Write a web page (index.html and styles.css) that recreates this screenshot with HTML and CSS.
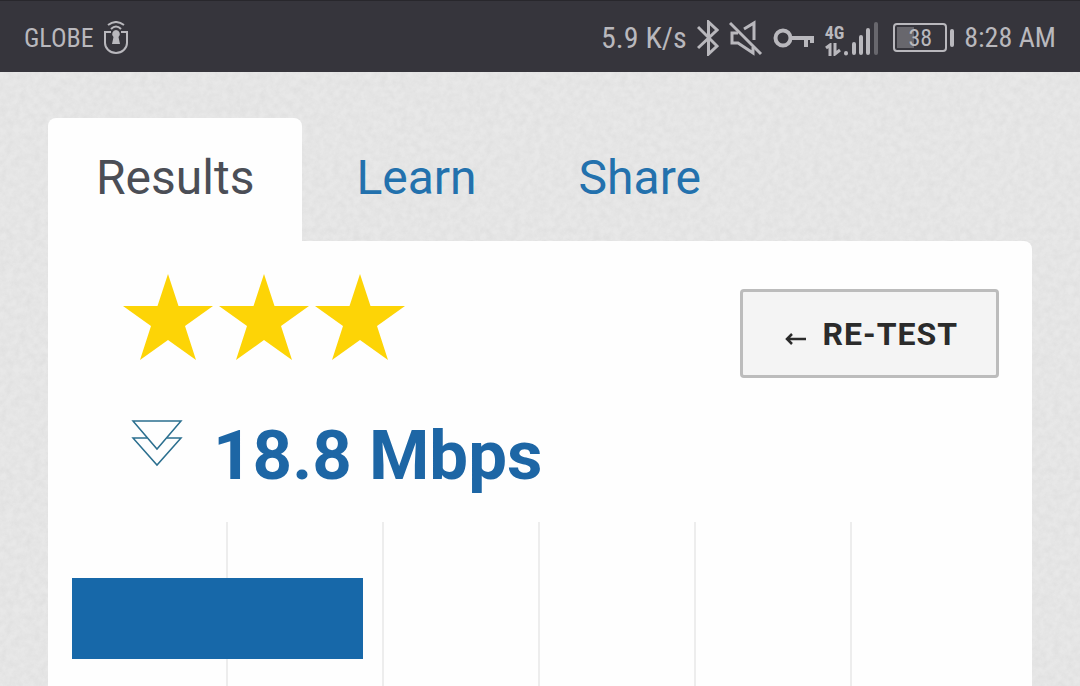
FILE: index.html
```html
<!DOCTYPE html>
<html lang="en">
<head>
    <meta charset="UTF-8">
    <meta name="viewport" content="width=device-width, initial-scale=1.0">
    <title>Speed Test Results</title>
    <link rel="stylesheet" href="styles.css">
</head>
<body>
    <header class="status">
        <div class="status-left">
            <span class="carrier">GLOBE</span>
            <svg class="icon" width="24" height="34" viewBox="0 0 24 34" fill="none" stroke="#b9b8bd" stroke-width="2">
                <path d="M7 11H1V22A11 10 0 0 0 23 22V11H17"/>
                <path d="M4 4Q12 -2 20 4M7 8Q12 3 17 8"/>
                <path d="M12 9A4 4 0 0 0 9.500 16L8 23H16L14.500 16A4 4 0 0 0 12 9Z" fill="#b9b8bd" stroke="none"/>
            </svg>
        </div>
        <div class="status-right">
            <span class="rate">5.9 K/s</span>
            <svg class="icon" width="22" height="36" viewBox="0 0 22 36" fill="none" stroke="#b9b8bd" stroke-width="3">
                <path d="M1 7L20 26L11.500 34V2L20 10L1 28"/>
            </svg>
            <svg class="icon" width="34" height="36" viewBox="0 0 34 36" fill="none" stroke="#b9b8bd" stroke-width="3">
                <path d="M1 3L32 34"/>
                <path d="M15 9L25 3V20M9 13H3V23H9L24 33V27"/>
            </svg>
            <svg class="icon key" width="42" height="22" viewBox="0 0 42 22" fill="none" stroke="#b9b8bd" stroke-width="4">
                <circle cx="10" cy="11" r="7.500"/>
                <path d="M18 11H41M33 11V20M39 11V16"/>
            </svg>
            <div class="network">
                <div class="network-type">
                    <span>4G</span>
                    <svg width="16" height="13" viewBox="0 0 16 13" fill="none" stroke="#b9b8bd" stroke-width="3">
                        <path d="M1 5L5 2V13M10 0V11L15 7"/>
                    </svg>
                </div>
                <svg width="34" height="36" viewBox="2 0 34 36" stroke="#b9b8bd" stroke-width="4" stroke-linecap="round">
                    <path d="M4 33V33.500M12 24V33M19 17V33M26 10V33"/>
                    <path d="M34 4V33" stroke="#68676d"/>
                </svg>
            </div>
            <div class="battery">
                <span class="battery-body">38</span>
                <span class="battery-tip"></span>
            </div>
            <span class="clock">8:28 AM</span>
        </div>
    </header>

    <main class="page">
        <nav class="tabs">
            <a class="tab active" href="#results">Results</a>
            <a class="tab" href="#learn">Learn</a>
            <a class="tab" href="#share">Share</a>
        </nav>

        <section class="panel" id="results">
            <div class="summary">
                <div class="rating" role="img" aria-label="3 stars">
                    <svg class="star" viewBox="0 0 90 86"><path d="M45 0L55.500 32H90L62 52L73 86L45 66L17 86L28 52L0 32H34.500Z"/></svg>
                    <svg class="star" viewBox="0 0 90 86"><path d="M45 0L55.500 32H90L62 52L73 86L45 66L17 86L28 52L0 32H34.500Z"/></svg>
                    <svg class="star" viewBox="0 0 90 86"><path d="M45 0L55.500 32H90L62 52L73 86L45 66L17 86L28 52L0 32H34.500Z"/></svg>
                </div>
                <button class="retest" type="button">
                    <svg width="22" height="12" viewBox="0 0 22 12" fill="none" stroke="#2b2b2b" stroke-width="2.500">
                        <path d="M21 6H2M7 1L2 6L7 11"/>
                    </svg>
                    RE-TEST
                </button>
            </div>

            <div class="speed">
                <svg width="52" height="48" viewBox="0 0 52 48" fill="none" stroke="#2b6f8f" stroke-width="1.500">
                    <path d="M2 1H50L26 29Z"/>
                    <path d="M16 18H2L26 45L50 18H36"/>
                </svg>
                <strong class="speed-value">18.8 Mbps</strong>
            </div>

            <div class="chart">
                <div class="chart-grid">
                    <span></span>
                    <span></span>
                    <span></span>
                    <span></span>
                    <span></span>
                    <span></span>
                </div>
                <div class="bar" style="width: 31.1%"></div>
            </div>
        </section>
    </main>
</body>
</html>
```
FILE: styles.css
```css
* {
    box-sizing: border-box;
    margin: 0;
    padding: 0;
}

body {
    display: flex;
    flex-direction: column;
    min-height: 100vh;
    font-family: Roboto, Arial, sans-serif;
    background-color: #e8e8e8;
    background-image: url("data:image/svg+xml,%3Csvg xmlns='http://www.w3.org/2000/svg' width='240' height='240'%3E%3Cfilter id='n'%3E%3CfeTurbulence type='fractalNoise' baseFrequency='.15' numOctaves='3' stitchTiles='stitch'/%3E%3CfeColorMatrix values='0 0 0 0 .5 0 0 0 0 .5 0 0 0 0 .5 .3 0 0 0 -.08'/%3E%3C/filter%3E%3Crect width='240' height='240' filter='url(%23n)'/%3E%3C/svg%3E");
}

/* phone status bar */
.status {
    display: flex;
    justify-content: space-between;
    align-items: center;
    height: 72px;
    padding: 2px 24px 0;
    border-top: 1px solid #28272c;
    background-color: #36353c;
    color: #b9b8bd;
    font-family: "Roboto Condensed", "Liberation Sans Narrow", "Liberation Sans", sans-serif;
    font-size: 28px;
    white-space: nowrap;
}

.status svg {
    display: block;
}

.status-left, .status-right {
    display: flex;
    align-items: center;
    gap: 10px;
}

.carrier {
    font-size: 26px;
}

.rate {
    font-size: 30px;
}

.network {
    display: flex;
    align-items: flex-end;
    margin-right: 5px;
}

.network-type {
    font-size: 18px;
    font-weight: bold;
    line-height: 20px;
}

.battery {
    display: flex;
    align-items: center;
    gap: 3px;
}

.battery-body {
    width: 54px;
    height: 29px;
    border: 2px solid #b9b8bd;
    border-radius: 4px;
    background: linear-gradient(90deg, #68676d 38%, transparent 38%) content-box;
    padding: 2px;
    font-size: 24px;
    line-height: 22px;
    text-align: center;
}

.battery-tip {
    width: 4px;
    height: 18px;
    border-radius: 2px;
    background-color: #b9b8bd;
}

/* tabs */
.page {
    display: flex;
    flex-direction: column;
    flex: 1;
    padding: 46px 48px 0;
}

.tabs {
    display: flex;
    gap: 6px;
}

.tab {
    padding: 31px 48px 34px;
    border-radius: 8px 8px 0 0;
    color: #2371ad;
    font-size: 48px;
    line-height: 58px;
    text-decoration: none;
}

.tab.active {
    background-color: #fefefe;
    color: #4b4e56;
}

.panel {
    display: flex;
    flex-direction: column;
    flex: 1;
    padding: 33px 24px 0;
    border-radius: 0 8px 0 0;
    background-color: #fefefe;
}

/* stars and button */
.summary {
    display: flex;
    justify-content: space-between;
    padding: 0 9px 0 51px;
}

.rating {
    display: flex;
    gap: 6px;
}

.star {
    width: 90px;
    height: 86px;
    fill: #fdd406;
}

.retest {
    display: flex;
    justify-content: center;
    align-items: center;
    gap: 16px;
    height: 89px;
    margin-top: 15px;
    padding: 0 38px 0 42px;
    border: 3px solid #bcbcbc;
    border-radius: 4px;
    background-color: #f4f4f4;
    color: #2b2b2b;
    font-family: inherit;
    font-size: 32px;
    font-weight: bold;
    letter-spacing: 1px;
    cursor: pointer;
}

.retest svg {
    margin-top: 10px;
}

.speed {
    display: flex;
    align-items: flex-start;
    gap: 30px;
    margin-top: 42px;
    padding-left: 59px;
}

.speed-value {
    color: #1d66a5;
    font-size: 69px;
    line-height: 72px;
}

/* chart */
.chart {
    display: grid;
    flex: 1;
    min-height: 160px;
    margin-top: 30px;
}

.chart-grid {
    display: grid;
    grid-template-columns: repeat(6, 1fr);
    grid-area: 1 / 1;
}

.chart-grid span {
    border-right: 2px solid #ededed;
}

.chart-grid span:last-child {
    border-right: none;
}

.bar {
    grid-area: 1 / 1;
    height: 81px;
    margin-top: 56px;
    background-color: #1768a9;
}
```
